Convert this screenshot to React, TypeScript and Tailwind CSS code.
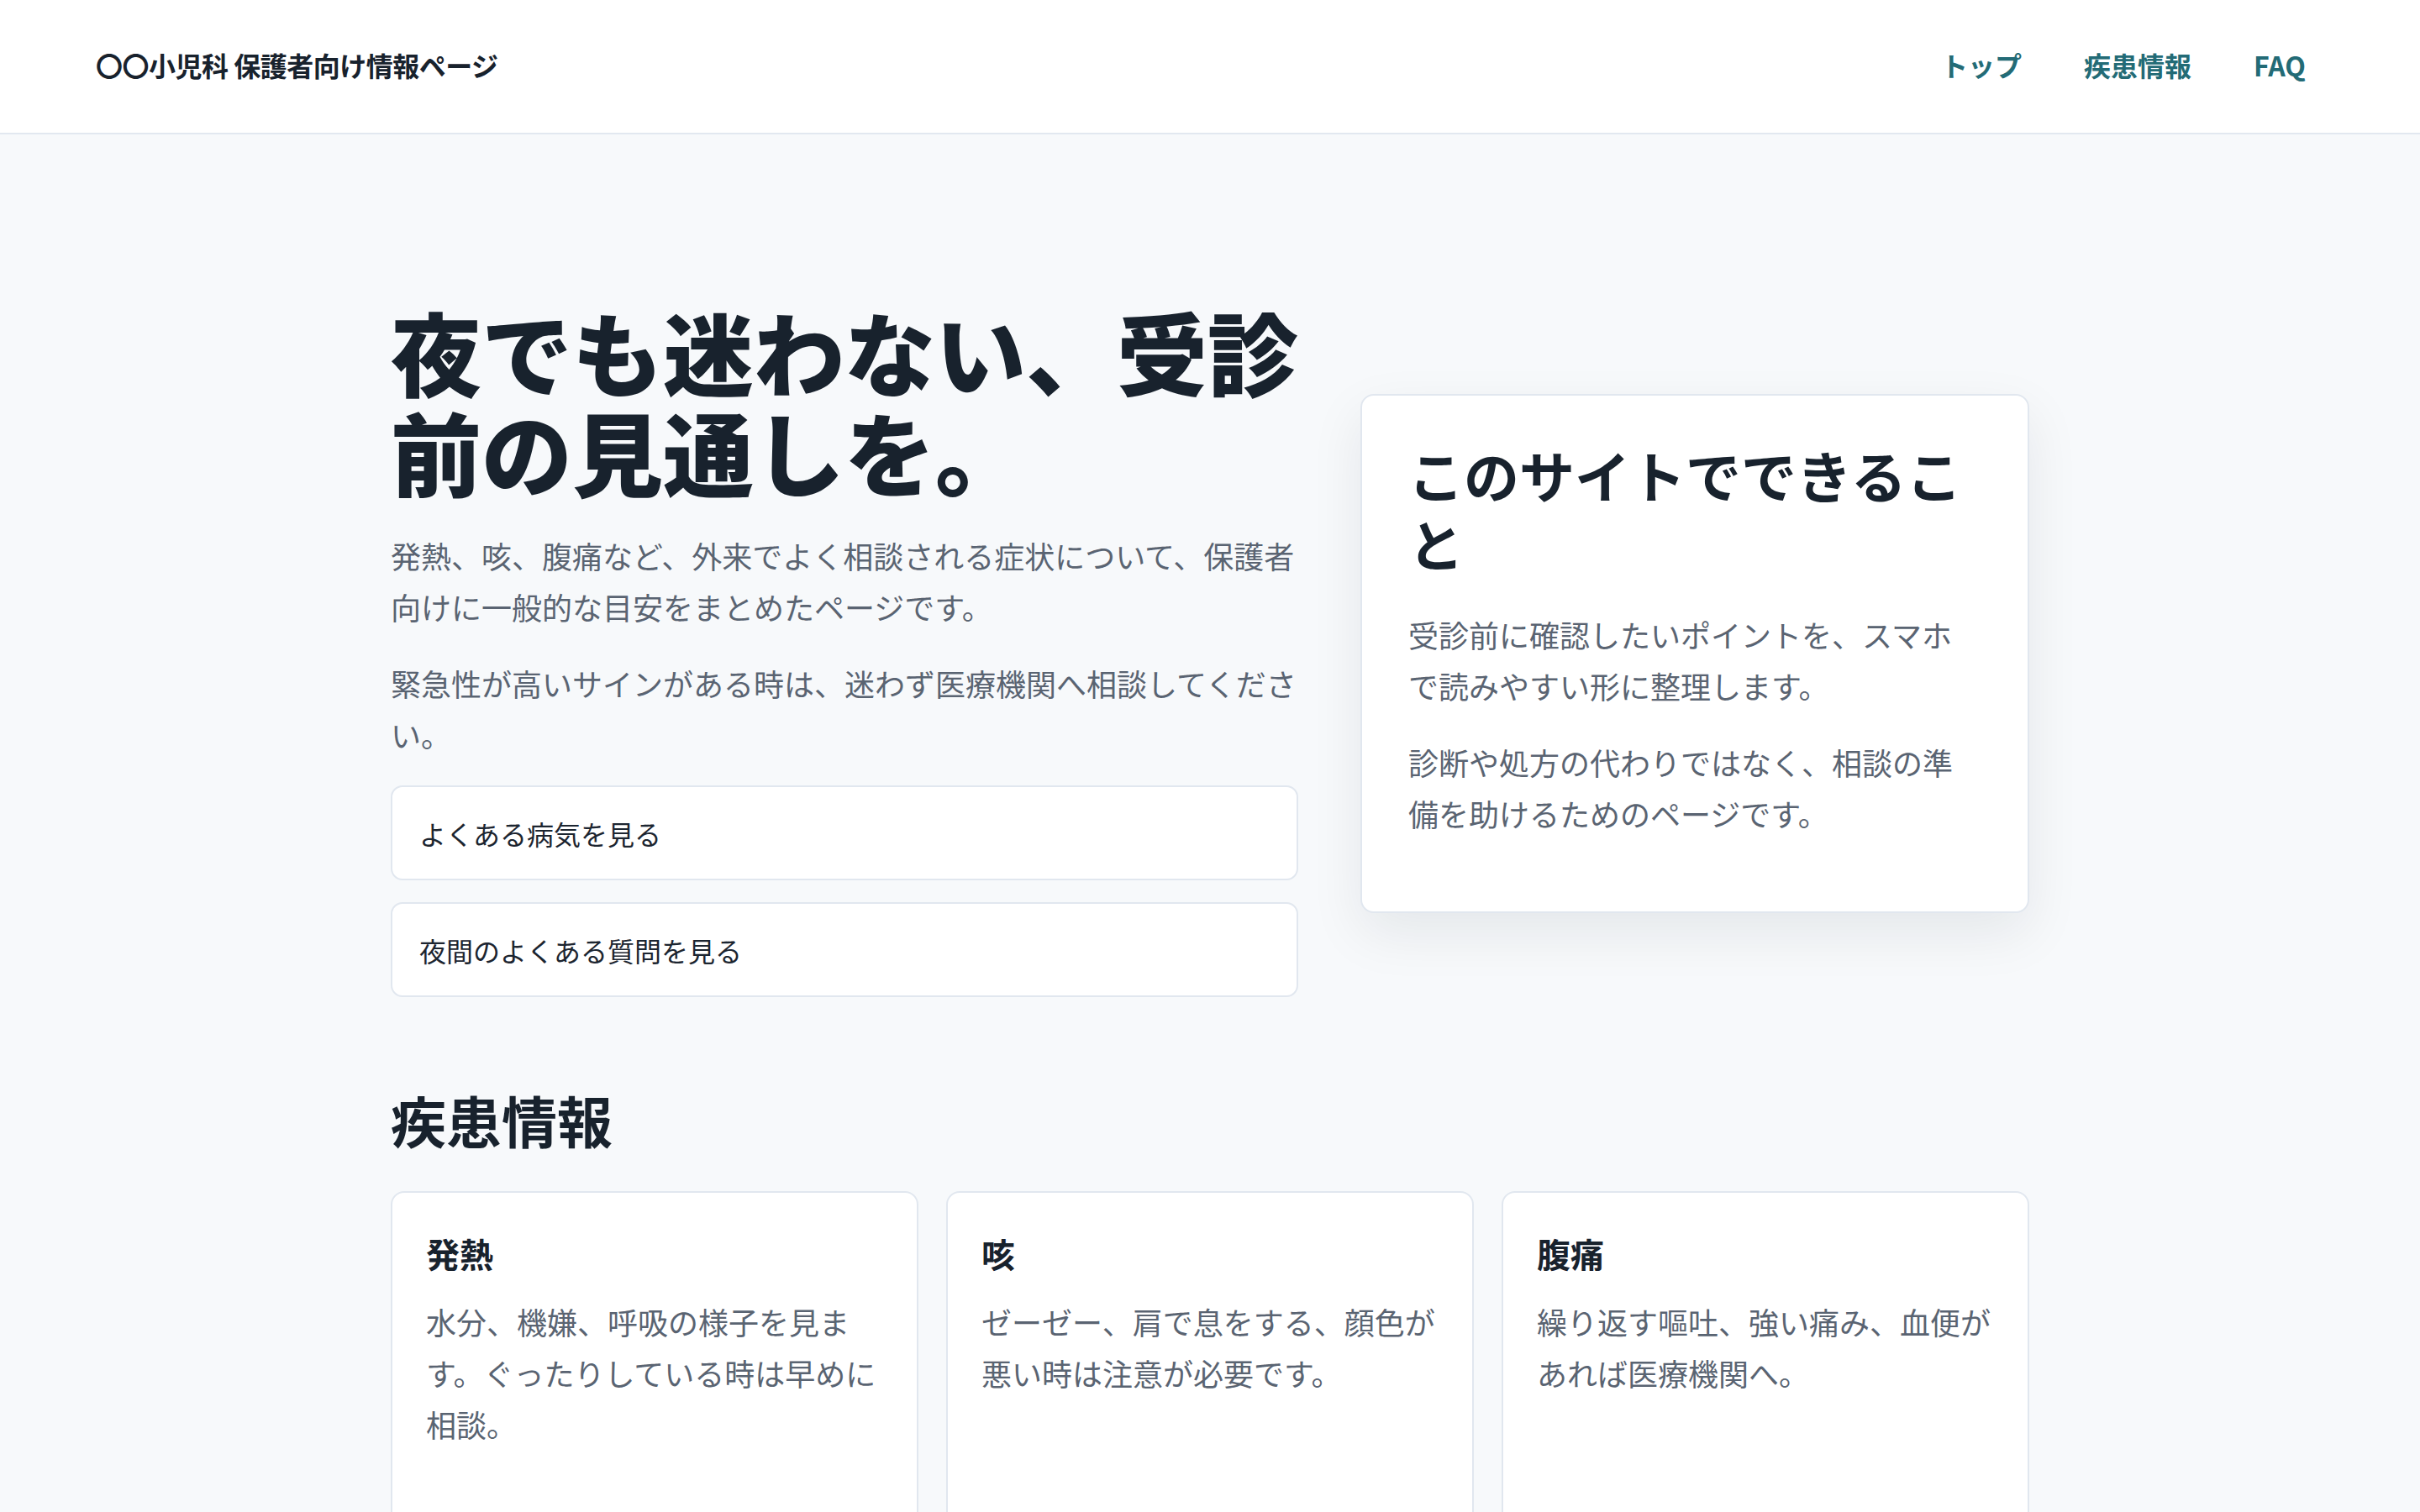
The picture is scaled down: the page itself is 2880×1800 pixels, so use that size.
const heroNotes = [
  "発熱、咳、腹痛など、外来でよく相談される症状について、保護者向けに一般的な目安をまとめたページです。",
  "緊急性が高いサインがある時は、迷わず医療機関へ相談してください。",
];

const cardNotes = [
  "受診前に確認したいポイントを、スマホで読みやすい形に整理します。",
  "診断や処方の代わりではなく、相談の準備を助けるためのページです。",
];

const diseases = [
  { title: "発熱", body: "水分、機嫌、呼吸の様子を見ます。ぐったりしている時は早めに相談。" },
  { title: "咳", body: "ゼーゼー、肩で息をする、顔色が悪い時は注意が必要です。" },
  { title: "腹痛", body: "繰り返す嘔吐、強い痛み、血便があれば医療機関へ。" },
];

function SiteHeader() {
  return (
    <header className="flex h-[160px] items-center border-b-2 border-[#e2e8f0] bg-white pb-[4px] pl-[114px] pr-[136px]">
      <p className="text-[32px] font-bold tracking-[-0.5px] text-[#18222d]">〇〇小児科 保護者向け情報ページ</p>
      <nav className="ml-auto flex items-center gap-[74px] text-[32px] font-bold text-[#236b76]">
        <a href="#top">トップ</a>
        <a href="#diseases">疾患情報</a>
        <a href="#faq">FAQ</a>
      </nav>
    </header>
  );
}

function Hero() {
  return (
    <section className="grid grid-cols-[1080px_796px] items-center gap-[74px]">
      <div>
        <h1 className="mb-[35px] text-[108px] font-black leading-[119px] text-[#18222d]">
          夜でも迷わない、受診前の見通しを。
        </h1>
        {heroNotes.map((t) => (
          <p key={t} className="mb-[30px] text-[36px] leading-[61px] text-[#5a6472]">
            {t}
          </p>
        ))}
        <div className="mt-[22px] flex flex-col gap-[26px]">
          {["よくある病気を見る", "夜間のよくある質問を見る"].map((label) => (
            <a
              key={label}
              href="#"
              className="flex h-[113px] items-center rounded-[14px] border-2 border-[#e1e7ef] bg-white px-[32px] text-[32px] text-[#1c2530]"
            >
              {label}
            </a>
          ))}
        </div>
      </div>

      <aside className="mt-[10px] rounded-[16px] border-2 border-[#e1e7ef] bg-white px-[55px] pb-[56px] pt-[52px] shadow-[0_24px_64px_rgba(15,23,42,0.08)]">
        <h2 className="mb-[38px] text-[66px] font-bold leading-[82px] text-[#18222d]">このサイトでできること</h2>
        {cardNotes.map((t) => (
          <p key={t} className="mb-[30px] text-[36px] leading-[61px] text-[#5a6472]">
            {t}
          </p>
        ))}
      </aside>
    </section>
  );
}

function DiseaseList() {
  return (
    <section id="diseases" className="mt-[104px]">
      <h2 className="mb-[45px] text-[66px] font-bold leading-[82px] text-[#18222d]">疾患情報</h2>
      <div className="grid grid-cols-3 gap-[33px]">
        {diseases.map((d) => (
          <article
            key={d.title}
            className="min-h-[480px] rounded-[16px] border-2 border-[#e1e7ef] bg-white px-[40px] pt-[44px]"
          >
            <h3 className="mb-[23px] text-[40px] font-bold leading-[56px] text-[#18222d]">{d.title}</h3>
            <p className="text-[36px] leading-[61px] text-[#5a6472]">{d.body}</p>
          </article>
        ))}
      </div>
    </section>
  );
}

export default function App() {
  return (
    <div className="min-h-screen bg-[#f7f9fb] font-['Noto_Sans_CJK_JP',sans-serif]">
      <SiteHeader />
      <main className="mx-auto w-[1950px] pb-[120px] pt-[198px]">
        <Hero />
        <DiseaseList />
      </main>
    </div>
  );
}
